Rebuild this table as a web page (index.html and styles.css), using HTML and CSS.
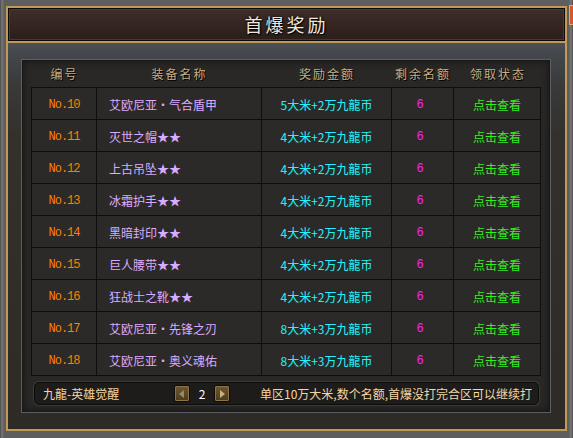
FILE: index.html
```html
<!DOCTYPE html>
<html lang="zh-CN">
<head>
    <meta charset="UTF-8">
    <title>首爆奖励</title>
    <link rel="stylesheet" href="styles.css">
</head>
<body>
    <div class="window">
        <div class="close-tab"></div>
        <div class="frame">
            <div class="title-bar">首爆奖励</div>
            <div class="panel">
                <div class="board">
                    <div class="board-head">
                        <span>编号</span>
                        <span>装备名称</span>
                        <span>奖励金额</span>
                        <span>剩余名额</span>
                        <span>领取状态</span>
                    </div>
                    <table class="rewards">
                        <colgroup>
                            <col style="width:64px">
                            <col style="width:164px">
                            <col style="width:129px">
                            <col style="width:61px">
                            <col style="width:86px">
                        </colgroup>
                        <tr><td class="num">No.10</td><td class="item">艾欧尼亚・气合盾甲</td><td class="prize">5大米+2万九龍币</td><td class="left">6</td><td class="claim">点击查看</td></tr>
                        <tr><td class="num">No.11</td><td class="item">灭世之帽★★</td><td class="prize">4大米+2万九龍币</td><td class="left">6</td><td class="claim">点击查看</td></tr>
                        <tr><td class="num">No.12</td><td class="item">上古吊坠★★</td><td class="prize">4大米+2万九龍币</td><td class="left">6</td><td class="claim">点击查看</td></tr>
                        <tr><td class="num">No.13</td><td class="item">冰霜护手★★</td><td class="prize">4大米+2万九龍币</td><td class="left">6</td><td class="claim">点击查看</td></tr>
                        <tr><td class="num">No.14</td><td class="item">黑暗封印★★</td><td class="prize">4大米+2万九龍币</td><td class="left">6</td><td class="claim">点击查看</td></tr>
                        <tr><td class="num">No.15</td><td class="item">巨人腰带★★</td><td class="prize">4大米+2万九龍币</td><td class="left">6</td><td class="claim">点击查看</td></tr>
                        <tr><td class="num">No.16</td><td class="item">狂战士之靴★★</td><td class="prize">4大米+2万九龍币</td><td class="left">6</td><td class="claim">点击查看</td></tr>
                        <tr><td class="num">No.17</td><td class="item">艾欧尼亚・先锋之刃</td><td class="prize">8大米+3万九龍币</td><td class="left">6</td><td class="claim">点击查看</td></tr>
                        <tr><td class="num">No.18</td><td class="item">艾欧尼亚・奥义魂佑</td><td class="prize">8大米+3万九龍币</td><td class="left">6</td><td class="claim">点击查看</td></tr>
                    </table>
                    <div class="footer-bar">
                        <span class="server">九龍-英雄觉醒</span>
                        <div class="pager">
                            <span class="page-btn">
                                <svg width="6" height="8" viewBox="0 0 6 8"><polygon points="5,0 5,8 0,4" fill="#9a8a5c"/></svg>
                            </span>
                            <span class="page-no">2</span>
                            <span class="page-btn">
                                <svg width="6" height="8" viewBox="0 0 6 8"><polygon points="1,0 1,8 6,4" fill="#c8b27a"/></svg>
                            </span>
                        </div>
                        <span class="notice">单区10万大米,数个名额,首爆没打完合区可以继续打</span>
                    </div>
                </div>
            </div>
        </div>
    </div>
</body>
</html>
```

FILE: styles.css
```css
* {
    margin: 0;
    padding: 0;
    box-sizing: border-box;
}
body {
    background-color: #5a5a5a;
    font-family: "Noto Sans CJK SC", "Noto Sans", sans-serif;
    font-size: 12px;
}
.window {
    position: relative;
    width: 573px;
    height: 438px;
    padding: 6px 6px 7px 6px;
    overflow: hidden;
    background: linear-gradient(90deg, #4a4a4a, #7a7a7a 2px, #5e5e5e 4px, #5e5e5e calc(100% - 4px), #7a7a7a calc(100% - 2px), #4a4a4a);
}
.close-tab {
    position: absolute;
    top: 5px;
    right: -14px;
    width: 18px;
    height: 20px;
    background-color: #d4582a;
    border: 1px solid #f0a070;
}
.frame {
    height: 100%;
    display: flex;
    flex-direction: column;
    border: 2px solid #c09a56;
    background-color: #1a1512;
}
.title-bar {
    height: 33px;
    border: 1px solid #0c0908;
    background: linear-gradient(#3e2e2b, #33241f 60%, #2a1e1b);
    box-shadow: inset 0 0 0 1px #4a3833;
    color: #efe8dc;
    font-size: 18px;
    letter-spacing: 3px;
    text-align: center;
    line-height: 30px;
    text-shadow: 1px 1px 1px #000, 0 0 3px #000;
}
.panel {
    flex: 1;
    border-top: 2px solid #c09a56;
    padding: 16px 14px 16px 13px;
    background: linear-gradient(#4c5054, #43474b 12px, #3a3a3a 40px, #34312d 90px, #2e2a26);
}
.board {
    height: 100%;
    padding: 0 7px 0 9px;
    border: 1px solid #5b5f63;
    background-color: #292826;
    box-shadow: inset 0 0 0 1px #1a1918, inset 0 0 8px #111;
}
.board-head {
    display: grid;
    grid-template-columns: 65px 165px 130px 62px 88px;
    height: 27px;
    align-items: center;
    color: #c6ae80;
    letter-spacing: 2px;
    text-shadow: 1px 1px 0 #000;
}
.board-head span {
    text-align: center;
    padding-left: 2px;
}
.rewards {
    width: 510px;
    table-layout: fixed;
    border-collapse: separate;
    border-spacing: 1px;
    background-color: #0e0e0e;
}
.rewards td {
    height: 31px;
    padding-top: 2px;
    background-color: #2b2a28;
    text-align: center;
    white-space: nowrap;
}
.rewards .num {
    color: #ff8000;
    font-family: "Liberation Mono", monospace;
    font-size: 12px;
    letter-spacing: -1px;
}
.rewards .item {
    text-align: left;
    padding-left: 12px;
    color: #dcaaff;
}
.rewards .prize {
    color: #22f4ff;
}
.rewards .left {
    color: #ff22ff;
    font-family: "Liberation Mono", monospace;
    padding-right: 5px;
}
.rewards .claim {
    color: #33ee22;
}
.footer-bar {
    display: flex;
    align-items: center;
    height: 23px;
    margin: 6px 4px 0 3px;
    padding-left: 8px;
    border: 1px solid #0b0b0a;
    border-radius: 5px;
    background-color: #1d1c1a;
    box-shadow: 0 0 0 1px #3b3a37;
    color: #f3d6a6;
    white-space: nowrap;
}
.server {
    width: 131px;
}
.pager {
    display: flex;
    align-items: center;
}
.page-btn {
    display: flex;
    align-items: center;
    justify-content: center;
    width: 16px;
    height: 17px;
    border: 1px solid #0e0b06;
    border-radius: 2px;
    background: linear-gradient(#6e5834, #4a3a20);
    box-shadow: inset 0 0 0 1px #8c7444;
}
.page-no {
    width: 24px;
    text-align: center;
    color: #ffffff;
}
.notice {
    margin-left: 30px;
}
```
